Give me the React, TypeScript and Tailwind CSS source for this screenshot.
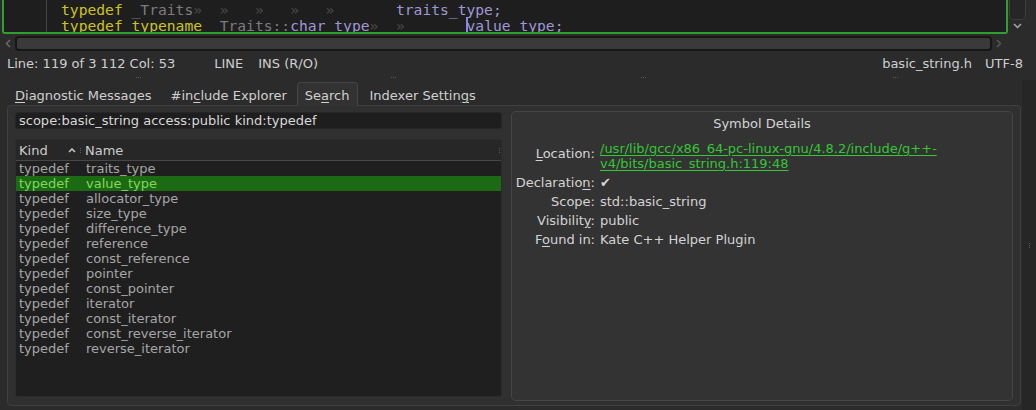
const symbols = [
  'traits_type',
  'value_type',
  'allocator_type',
  'size_type',
  'difference_type',
  'reference',
  'const_reference',
  'pointer',
  'const_pointer',
  'iterator',
  'const_iterator',
  'const_reverse_iterator',
  'reverse_iterator',
];

const Grip = ({ vertical = false }: { vertical?: boolean }) => (
  <div className={vertical ? 'flex flex-col gap-[1px]' : 'flex gap-[1px]'}>
    <span className="h-[1px] w-[1px] bg-[#5a5a5a]" />
    <span className="h-[1px] w-[1px] bg-[#5a5a5a]" />
    <span className="h-[1px] w-[1px] bg-[#5a5a5a]" />
  </div>
);

function Editor() {
  return (
    <div className="flex h-[34px]">
      <div className="ml-[2px] flex h-full w-[1006px] overflow-hidden rounded-b-[3px] border-x-2 border-b-2 border-[#2f9f2f] bg-[#1e1e1e]">
        <div className="h-full w-[43px] shrink-0 border-r border-[#464646]" />
        <pre className="pl-[14px] pt-[2px] font-['DejaVu_Sans_Mono',monospace] text-[14.65px] leading-[16px] text-[#9f98d6]">
          <div>
            <span className="text-[#cdc41b]">typedef</span> <span className="text-[#7c7c7c]">_Traits</span>
            <span className="text-[#4a4a4a]">{'»  »   »   »   »       '}</span>
            traits_type;
          </div>
          <div>
            <span className="text-[#cdc41b]">typedef typename</span> <span className="text-[#7c7c7c]">_Traits::</span>
            char_type
            <span className="text-[#4a4a4a]">{'»  »       '}</span>
            <span className="relative">
              <span className="absolute left-[-1px] top-0 h-[16px] w-[2px] bg-[#8c86e8]" />
              value_type;
            </span>
          </div>
        </pre>
      </div>
      <div className="ml-[1px] flex w-[17px] flex-col items-center">
        <div className="h-[20px] w-[17px] rounded-b-[5px] border border-t-0 border-[#3c3c3c] bg-[#262626]" />
        <svg width="9" height="6" viewBox="0 0 9 6" className="mt-[3px]">
          <path d="M1 1l3.5 3.5L8 1" fill="none" stroke="#a8a8a8" strokeWidth="1.5" />
        </svg>
      </div>
    </div>
  );
}

function HScroll() {
  return (
    <div className="flex h-[19px] items-center">
      <svg width="6" height="9" viewBox="0 0 6 9" className="ml-[5px]">
        <path d="M5 1L1.5 4.5 5 8" fill="none" stroke="#6a6a6a" strokeWidth="1.5" />
      </svg>
      <div className="ml-[4px] h-[15px] w-[977px] rounded-[4px] border-2 border-[#171717] bg-[#3a3a3a]" />
      <svg width="6" height="9" viewBox="0 0 6 9" className="ml-[4px]">
        <path d="M1 1l3.5 3.5L1 8" fill="none" stroke="#555" strokeWidth="1.5" />
      </svg>
    </div>
  );
}

function StatusBar() {
  return (
    <div className="flex h-[21px] items-center text-[#cfcfcf]">
      <span className="ml-[7px]">Line: 119 of 3 112 Col: 53</span>
      <span className="ml-[39px]">LINE</span>
      <span className="ml-[15px]">INS (R/O)</span>
      <span className="ml-auto">basic_string.h</span>
      <span className="ml-[13px] mr-[13px]">UTF-8</span>
    </div>
  );
}

function Tabs() {
  return (
    <div className="relative z-10 -mb-[1px] mt-[2px] flex h-[24px] text-[#d0d0d0]">
      <span className="ml-[15px] pt-[6px]">
        <span className="underline underline-offset-2">D</span>iagnostic Messages
      </span>
      <span className="ml-[19px] pt-[6px]">
        #in<span className="underline underline-offset-2">c</span>lude Explorer
      </span>
      <span className="ml-[10px] rounded-t-[4px] border border-b-0 border-[#454545] bg-[#323232] px-[7px] pt-[5px]">
        Se<span className="underline underline-offset-2">a</span>rch
      </span>
      <span className="ml-[12px] pt-[6px]">
        Indexer Settin<span className="underline underline-offset-2">g</span>s
      </span>
    </div>
  );
}

function SearchPane() {
  return (
    <div className="flex w-[487px] flex-col pt-[1px]">
      <div className="flex h-[17px] items-center rounded-[3px] border border-[#262626] bg-[#1e1e1e] pl-[3px] text-[#d8d8d8]">
        scope:basic_string access:public kind:typedef
      </div>
      <div className="mt-[10px] h-[258px] overflow-hidden rounded-[3px] border border-[#2c2c2c] bg-[#1f1f1f]">
        <div className="flex h-[21px] items-center border-b border-[#474747] bg-[#272727] pl-[3px] pt-[1px] text-[#cccccc]">
          <span className="w-[48px]">Kind</span>
          <svg width="8" height="5" viewBox="0 0 8 5" className="ml-[1px]">
            <path d="M1 4l3-3 3 3" fill="none" stroke="#c8c8c8" strokeWidth="1.5" />
          </svg>
          <span className="ml-[4px]">
            <Grip vertical />
          </span>
          <span className="ml-[4px]">Name</span>
          <span className="ml-auto mr-[1px]">
            <Grip vertical />
          </span>
        </div>
        <div>
          {symbols.map((name, i) => (
            <div
              key={name}
              className={
                i === 1
                  ? 'flex h-[15px] items-center bg-[#1d6a14] pl-[3px] text-[#7fd95c]'
                  : 'flex h-[15px] items-center pl-[3px] text-[#a6a6a6]'
              }
            >
              <span className="w-[67px]">typedef</span>
              <span>{name}</span>
            </div>
          ))}
        </div>
      </div>
    </div>
  );
}

function SymbolDetails() {
  return (
    <div className="ml-[9px] h-[290px] w-[502px] rounded-[5px] border border-[#464646] bg-[#333333] pt-[4px] text-[#d4d4d4]">
      <div className="text-center leading-[15px]">Symbol Details</div>
      <div className="mt-[10px] grid grid-cols-[83px_1fr] gap-x-[5px] gap-y-[4px] leading-[15px]">
        <span className="mt-[5px] text-right">
          <span className="underline underline-offset-2">L</span>ocation:
        </span>
        <span className="text-[#35c635] underline underline-offset-2">
          /usr/lib/gcc/x86_64-pc-linux-gnu/4.8.2/include/g++-
          <br />
          v4/bits/basic_string.h:119:48
        </span>
        <span className="text-right">
          Declaratio<span className="underline underline-offset-2">n</span>:
        </span>
        <span>✔</span>
        <span className="text-right">Scope:</span>
        <span>std::basic_string</span>
        <span className="text-right">
          Visibilit<span className="underline underline-offset-2">y</span>:
        </span>
        <span>public</span>
        <span className="text-right">
          F<span className="underline underline-offset-2">o</span>und in:
        </span>
        <span>Kate C++ Helper Plugin</span>
      </div>
    </div>
  );
}

export default function App() {
  return (
    <div className="flex h-[410px] w-[1036px] flex-col overflow-hidden bg-[#2b2b2b] font-['DejaVu_Sans',sans-serif] text-[13px] leading-[15px]">
      <Editor />
      <HScroll />
      <StatusBar />
      <div className="flex h-[6px] items-center">
        <span className="ml-[136px]"><Grip /></span>
        <span className="ml-[250px]"><Grip /></span>
        <span className="ml-[245px]"><Grip /></span>
        <span className="ml-[247px]"><Grip /></span>
      </div>

      <div className="flex flex-1">
        <div className="flex w-[1022px] flex-col">
          <Tabs />
          <div className="ml-[7px] flex h-[301px] w-[1014px] rounded-[4px] border border-[#404040] bg-[#303030] pl-[7px] pt-[5px]">
            <SearchPane />
            <SymbolDetails />
          </div>
        </div>
        <div className="flex flex-1 items-center justify-center bg-[#262626]">
          <Grip vertical />
        </div>
      </div>
    </div>
  );
}
